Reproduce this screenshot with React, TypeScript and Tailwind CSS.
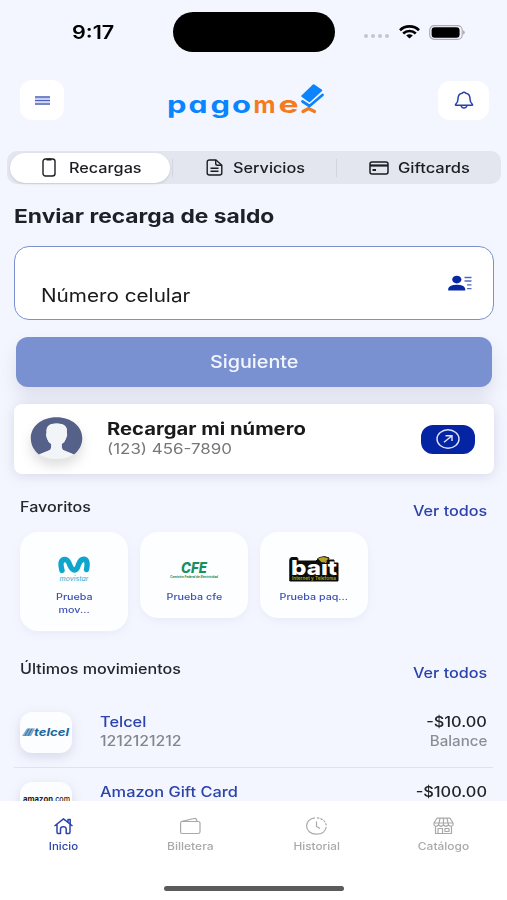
import type { ReactNode } from 'react';
import { clsx } from 'clsx';

const Wide = ({ className, children }: { className?: string; children: ReactNode }) => (
  <span className={clsx('inline-block whitespace-nowrap', className)}>{children}</span>
);

const StatusBar = () => (
  <div className="flex h-16 items-center pl-[72px]">
    <Wide className="mt-[2px] w-[42px] origin-left scale-x-[1.2] text-[18px] font-semibold leading-6 text-black">9:17</Wide>
    <div className="ml-[59px] h-10 w-[162px] rounded-[20px] bg-black" />
    <div className="ml-[29px] mt-2 flex gap-[3px]">
      {[0, 1, 2, 3].map((i) => (
        <i key={i} className="h-1 w-1 rounded-full bg-[#c3c5cf]" />
      ))}
    </div>
    <svg className="ml-[10px]" width="21" height="14" viewBox="0 0 21 14" fill="none" stroke="#000" strokeWidth="2.6">
      <path d="M1 5.2C6.2.1 14.8.1 20 5.2" />
      <path d="M4.2 8.5C7.7 5.2 13.3 5.2 16.8 8.5" />
      <path d="M10.5 13.4L7.2 10.5Q10.5 8 13.8 10.5Z" fill="#000" stroke="none" />
    </svg>
    <svg className="ml-[9px]" width="37" height="15" viewBox="0 0 37 15">
      <rect x=".7" y=".7" width="32.5" height="13.6" rx="4.5" fill="none" stroke="#aaacb3" strokeWidth="1.2" />
      <rect x="2.6" y="2.3" width="28" height="10.4" rx="3.2" fill="#000" />
      <path d="M34.3 5.3Q37 7.5 34.3 9.7Z" fill="#8e9097" />
    </svg>
  </div>
);

const logoLetters = [
  { char: 'p', x: -1, width: 19.5, color: '#0a84ff' },
  { char: 'a', x: 20.5, width: 19, color: '#0a84ff' },
  { char: 'g', x: 42.5, width: 19.5, color: '#0a84ff' },
  { char: 'o', x: 64, width: 19, color: '#0a84ff' },
  { char: 'm', x: 85.5, width: 22, color: '#f47a20' },
  { char: 'e', x: 110.5, width: 20, color: '#f47a20' },
];

const Logo = () => (
  <svg className="ml-[104px] overflow-visible" width="158" height="40" viewBox="0 0 158 40">
    {logoLetters.map(({ char, x, width, color }) => (
      <text
        key={char}
        x={x}
        y="32.5"
        fontSize="24"
        fontWeight="700"
        fill={color}
        textLength={width}
        lengthAdjust="spacingAndGlyphs"
        className="[font-feature-settings:'cv11']"
      >
        {char}
      </text>
    ))}
    <path d="M135 31.5L140.500 28.500L146.500 31.5" fill="none" stroke="#f47a20" strokeWidth="3.2" strokeLinecap="round" strokeLinejoin="round" />
    <path d="M145.5 5L153.5 10.5L141.5 21.5L134 16Z" fill="#0a84ff" stroke="#0a84ff" strokeWidth="1.6" strokeLinejoin="round" />
    <path d="M134.5 21.5L141.5 26L154.5 15" fill="none" stroke="#0a84ff" strokeWidth="2.8" strokeLinecap="round" strokeLinejoin="round" />
  </svg>
);

const Header = () => (
  <header className="mt-4 flex h-10 items-center pl-5 pr-[18px]">
    <button className="flex h-10 w-11 items-center justify-center rounded-xl bg-white">
      <svg width="15" height="9" viewBox="0 0 15 9" stroke="#4b5fb8" strokeWidth="1.3">
        <path d="M0 1h15M0 4.500h15M0 8h15" />
        <path d="M0 2.700h15M0 6.200h15" stroke="#c3caec" />
      </svg>
    </button>
    <Logo />
    <button className="ml-auto flex h-[39px] w-[51px] items-center justify-center rounded-xl bg-white">
      <svg width="20" height="18" viewBox="0 0 20 18" fill="none" stroke="#2740ab" strokeWidth="1.5" strokeLinejoin="round">
        <path d="M2 14.2Q1 14.2 1.7 13.2Q4 11 4 8Q4 3 8 2.3Q10 .2 12 2.3Q16 3 16 8Q16 11 18.3 13.2Q19 14.2 18 14.2Z" />
        <path d="M7.2 14.5Q7.5 17 10 17T12.8 14.5" />
      </svg>
    </button>
  </header>
);

const Tabs = () => (
  <div className="ml-[7px] mt-[31px] flex h-[33px] w-[494px] items-center rounded-[10px] bg-[#e3e6ef] text-[14px] font-medium leading-5 text-[#1c1d22]">
    <div className="ml-[3px] flex h-[30px] w-40 items-center rounded-[15px] bg-white pl-8 shadow-sm">
      <svg width="14" height="19" viewBox="0 0 14 19" fill="none" stroke="#1c1d22" strokeWidth="1.4">
        <rect x="1" y="1" width="12" height="17" rx="2.5" />
        <path d="M4.5 1.5h5" strokeWidth="2" />
      </svg>
      <Wide className="ml-[13px] origin-left scale-x-[1.16]">Recargas</Wide>
    </div>
    <i className="ml-[2px] h-[18px] w-px bg-[#d1d4de]" />
    <svg className="ml-[33px]" width="17" height="17" viewBox="0 0 17 17" fill="none" stroke="#1c1d22" strokeWidth="1.4" strokeLinejoin="round">
      <path d="M3.5 1H10L15.8 6.2V14Q15.8 16 13.5 16H3.5Q1.2 16 1.2 14V3Q1.2 1 3.5 1Z" />
      <path d="M9.7 1V4.5Q9.7 6.3 11.5 6.3H15.5M4.5 9.3H12.5M4.5 12.3H12.5" />
    </svg>
    <Wide className="ml-[10px] w-[74px] origin-left scale-x-[1.16]">Servicios</Wide>
    <i className="ml-[29px] h-[18px] w-px bg-[#d1d4de]" />
    <svg className="ml-8" width="20" height="14" viewBox="0 0 20 14" fill="none" stroke="#1c1d22" strokeWidth="1.5">
      <rect x="1" y="1" width="18" height="12" rx="2" />
      <path d="M1 4.5H19" strokeWidth="2.2" />
      <path d="M3.5 9H7" strokeWidth="2" />
    </svg>
    <Wide className="ml-[9px] origin-left scale-x-[1.18]">Giftcards</Wide>
  </div>
);

const RechargeForm = () => (
  <>
    <h1 className="ml-[14px] mt-[21px] h-6 text-[19px] font-bold leading-6 text-[#1c2027]">
      <Wide className="origin-left scale-x-[1.2]">Enviar recarga de saldo</Wide>
    </h1>
    <div className="ml-[14px] mt-[17px] flex h-[74px] w-[480px] items-center rounded-[15px] border border-[#7c90cf] bg-white pl-[26px] pr-[21px]">
      <Wide className="mt-[25px] origin-left scale-x-[1.15] text-[18px] leading-6 text-[#1a1a1a]">Número celular</Wide>
      <svg className="ml-auto" width="24" height="16" viewBox="0 0 24 16" fill="#0a27a3">
        <ellipse cx="8.8" cy="4.6" rx="4.6" ry="3.9" />
        <path d="M.2 15.5V13.8Q1.2 9.8 8.8 9.8T17.2 13.8V15.5Z" />
        <path d="M16.5 2.500H23.5M16.5 6H23.5M19 9.800H23.5M19 13.7H23.5" stroke="#5267bd" strokeWidth="1.3" />
      </svg>
    </div>
    <button className="ml-4 mt-[17px] flex h-[50px] w-[476px] items-center justify-center rounded-xl bg-[#7990d1] text-[17.5px] font-medium text-[#f3f6ff] shadow-[0_10px_18px_rgba(60,65,90,0.13)]">
      <Wide className="scale-x-[1.13]">Siguiente</Wide>
    </button>
  </>
);

const MyNumber = () => (
  <div className="relative ml-[14px] mt-[17px] flex h-[70px] w-[480px] items-center rounded-lg bg-white pl-4 pr-[19px] shadow-[0_2px_14px_rgba(60,65,110,0.16)]">
    <svg className="drop-shadow-[0_7px_6px_rgba(0,0,0,0.13)]" width="53" height="46" viewBox="0 0 53 46">
      <path d="M26.5 1.300C42 1.300 52.3 11 52.3 22C52.3 29 49 34.5 44 38.5L33 34Q31.5 32.5 31.7 28Q35 26 36 22.5Q38 19 36.8 16.5Q38 7.500 26.5 7.500Q15.5 7.500 16.6 16.5Q15.3 19 17 22.5Q18 26 21.2 28Q21.5 32.5 20 34L9 38.5C4 34.5.8 29 .8 22C.8 11 11 1.300 26.5 1.300Z" fill="#56618a" />
      <path d="M20 34Q21.5 32.5 21.2 28Q18 26 17 22.5Q15.3 19 16.6 16.5Q15.5 7.500 26.5 7.500Q38 7.500 36.8 16.5Q38 19 36 22.5Q35 26 31.7 28Q31.5 32.5 33 34L44 38.5Q36 43 26.5 43T9 38.5Z" fill="#f2f5f7" />
    </svg>
    <div className="ml-[24px]">
      <div className="h-5 text-[17px] font-bold leading-[21px] text-[#1a1a1c]">
        <Wide className="origin-left scale-x-[1.19]">Recargar mi número</Wide>
      </div>
      <div className="h-5 text-[14px] leading-5 text-[#76777b]">
        <Wide className="origin-left scale-x-[1.21]">(123) 456-7890</Wide>
      </div>
    </div>
    <button className="ml-auto flex h-[29px] w-[54px] items-center justify-center rounded-xl bg-[#0524a3]">
      <svg width="24" height="20" viewBox="0 0 24 20" fill="none" stroke="#dfe4f8" strokeWidth="1.4">
        <ellipse cx="12" cy="10" rx="11" ry="9.2" />
        <path d="M8 13.3L15.7 7M9.500 6.7H16V12" />
      </svg>
    </button>
  </div>
);

const SectionTitle = ({ title, className }: { title: string; className: string }) => (
  <div className={clsx('flex h-5 justify-between pl-[20px] pr-5 text-[14px] font-medium leading-[21px]', className)}>
    <Wide className="origin-left scale-x-[1.15] text-[#24262b]">{title}</Wide>
    <Wide className="mt-1 origin-right scale-x-[1.155] text-[#2b43ab]">Ver todos</Wide>
  </div>
);

const Movistar = () => (
  <svg width="32" height="26" viewBox="0 0 32 26">
    <path d="M4 14.500Q1 3.500 7 3.500Q10 3.500 12 9.500Q14 14 16.5 14T20.5 8.500Q22.500 3 26 3.200Q30.500 4 28.500 13.500" fill="none" stroke="#0fa5cd" strokeWidth="5.4" strokeLinecap="round" strokeLinejoin="round" />
    <text x="1.5" y="24.5" fontSize="6" fontWeight="500" fontStyle="italic" fill="#4bb6cf" textLength="29" lengthAdjust="spacingAndGlyphs">movistar</text>
  </svg>
);

const Cfe = () => (
  <svg width="50" height="26" viewBox="0 0 50 26">
    <text x="12" y="17" fontSize="14" fontWeight="800" fontStyle="italic" fill="#168f61" textLength="26" lengthAdjust="spacingAndGlyphs">CFE</text>
    <text x="1" y="21.5" fontSize="3.6" fontWeight="700" fontStyle="italic" fill="#168f61" textLength="48" lengthAdjust="spacingAndGlyphs">Comisión Federal de Electricidad</text>
  </svg>
);

const Bait = () => (
  <svg width="50" height="26" viewBox="0 0 50 26">
    <path d="M3 1.500H8Q9 1.500 9 5H27L30 2Q36-.500 40 2L39 4H45V7H49V25H.8V4Q.8 1.500 3 1.500Z" fill="#0c0c0a" stroke="#0c0c0a" strokeLinejoin="round" />
    <text x="2" y="18.5" fontSize="20" fontWeight="800" fill="#fff" textLength="46" lengthAdjust="spacingAndGlyphs">bait</text>
    <path d="M28.5 2.5Q34.5-1 40 2.5L36 6.5H32.5Z" fill="#b6a522" stroke="#0c0c0a" strokeWidth=".6" />
    <text x="3" y="24" fontSize="5" fontWeight="600" fill="#b6a522" textLength="44" lengthAdjust="spacingAndGlyphs">Internet y Telefonía</text>
  </svg>
);

const favorites = [
  { logo: <Movistar />, lines: ['Prueba', 'mov...'] },
  { logo: <Cfe />, lines: ['Prueba cfe'] },
  { logo: <Bait />, lines: ['Prueba paq...'] },
];

const Favorites = () => (
  <div className="mt-4 flex h-[99px] items-start gap-3 pl-5">
    {favorites.map(({ logo, lines }) => (
      <div
        key={lines.join(' ')}
        className="flex w-[108px] flex-col items-center rounded-[18px] bg-[#fdfeff] pb-[15px] pt-6 text-[9px] font-medium leading-[13px] text-[#3b4fb0] shadow-[0_3px_10px_rgba(80,90,150,0.07)]"
      >
        {logo}
        <div className="mt-2 flex flex-col items-center">
          {lines.map((line) => (
            <Wide key={line} className="scale-x-[1.19]">{line}</Wide>
          ))}
        </div>
      </div>
    ))}
  </div>
);

type MovementProps = { logo: ReactNode; name: string; detail?: string; amount: string; kind?: string };

const Movement = ({ logo, name, detail, amount, kind }: MovementProps) => (
  <div className="flex h-[41px] items-start pl-5 pr-5 text-[14px] font-medium leading-5">
    <div className="flex h-[41px] w-[52px] shrink-0 items-center justify-center rounded-xl bg-[#fcfdff] shadow-[0_4px_12px_rgba(70,75,120,0.17)]">
      {logo}
    </div>
    <div className="ml-7 flex flex-col items-start">
      <Wide className="origin-left scale-x-[1.17] text-[#2b43ab]">{name}</Wide>
      {detail && <Wide className="-mt-px origin-left scale-x-[1.13] text-[#85868c]">{detail}</Wide>}
    </div>
    <div className="ml-auto flex flex-col items-end">
      <Wide className="origin-right scale-x-[1.17] text-[#222327]">{amount}</Wide>
      {kind && <Wide className="-mt-px origin-right scale-x-[1.08] text-[#8d8e95]">{kind}</Wide>}
    </div>
  </div>
);

const TelcelLogo = () => (
  <svg width="50" height="14" viewBox="0 0 50 14">
    <path d="M6 2.500H14L10 10H1Z" fill="#7ba9cc" />
    <path d="M8 2.500L4 10M11 2.500L7 10" stroke="#2e73a8" strokeWidth="1" />
    <text x="13" y="10.3" fontSize="11" fontWeight="700" fontStyle="italic" fill="#19689f" textLength="35" lengthAdjust="spacingAndGlyphs">telcel</text>
  </svg>
);

const AmazonLogo = () => (
  <svg width="48" height="14" viewBox="0 0 48 14">
    <text x="1" y="6" fontSize="8" fontWeight="700" fill="#222" textLength="30" lengthAdjust="spacingAndGlyphs">amazon</text>
    <text x="31" y="6" fontSize="8" fill="#222" textLength="17" lengthAdjust="spacingAndGlyphs">.com</text>
  </svg>
);

const navItems = [
  {
    label: 'Inicio',
    scale: 'scale-x-[1.09]',
    icon: (
      <path d="M1.500 9L10.500 1.800L19.500 9M15 5V2.5H17.200V7M4 7.500V15Q4 16.500 5 16.500H7.500V12Q7.500 9.800 10.300 9.800T13.200 12V16.500H16Q17 16.500 17 15V7.500" strokeWidth="1.5" />
    ),
  },
  {
    label: 'Billetera',
    scale: 'scale-x-[1.15]',
    icon: <path d="M1.5 4.5H18Q20 4.5 20 6V15Q20 16.500 18 16.500H2Q.6 16.500.6 15V6Q.6 4.500 2 4.3L14 1.5Q16.500 1 17 4.300" />,
  },
  {
    label: 'Historial',
    scale: 'scale-x-[1.12]',
    icon: (
      <>
        <path d="M9 .8C3.5 1.300.6 5 .6 9C.6 13.5 4.500 17.200 10.500 17.200C16 17.200 19.500 14 20.300 10" />
        <path d="M11 .8C16.500 1.300 20.300 5 20.300 9.500" strokeDasharray="2.500 1" />
        <path d="M10.500 4.500V9.500L14 11.500" />
      </>
    ),
  },
  {
    label: 'Catálogo',
    scale: 'scale-x-[1.14]',
    icon: (
      <path d="M4 1.2H17L20 6V8Q18 10.500 15.500 8Q13 10.500 10.500 8Q8 10.500 5.500 8Q3 10.500 1 8V6ZM1.500 6H19.500M7 1.5L5.500 8M10.500 1.5V8M14 1.5L15.500 8M2.500 9.500V16.500H18.500V9.500M5 16.500V11.500H9.500V16.500M12 11.500H16V14.500H12Z" />
    ),
  },
];

const BottomNav = () => (
  <nav className="relative h-[99px] bg-white">
    <div className="grid grid-cols-4 pt-4">
      {navItems.map(({ label, scale, icon }, i) => (
        <div key={label} className={clsx('flex flex-col items-center', i === 0 ? 'text-[#2b45ab]' : 'text-[#a9a9ab]')}>
          <svg width="21" height="18" viewBox="0 0 21 18" fill="none" stroke="currentColor" strokeWidth="1.2" strokeLinejoin="round">
            {icon}
          </svg>
          <Wide className={clsx('mt-[6px] text-[10.5px] font-medium leading-3', scale)}>{label}</Wide>
        </div>
      ))}
    </div>
    <div className="ml-[164px] mt-[33px] h-[5px] w-[180px] rounded-full bg-[#5b5b5b]" />
  </nav>
);

const App = () => (
  <div className="h-[900px] w-[507px] overflow-hidden bg-[#f4f6ff] font-['Inter','Liberation_Sans',sans-serif]">
    <main className="h-[801px] overflow-hidden">
      <StatusBar />
      <Header />
      <Tabs />
      <RechargeForm />
      <MyNumber />
      <SectionTitle title="Favoritos" className="mt-[22px]" />
      <Favorites />
      <SectionTitle title="Últimos movimientos" className="mt-[27px]" />
      <div className="mt-[34px]">
        <Movement logo={<TelcelLogo />} name="Telcel" detail="1212121212" amount="-$10.00" kind="Balance" />
      </div>
      <div className="mx-[14px] my-[14px] h-px bg-[#dfe3f0]" />
      <Movement logo={<AmazonLogo />} name="Amazon Gift Card" amount="-$100.00" />
    </main>
    <BottomNav />
  </div>
);

export default App;
